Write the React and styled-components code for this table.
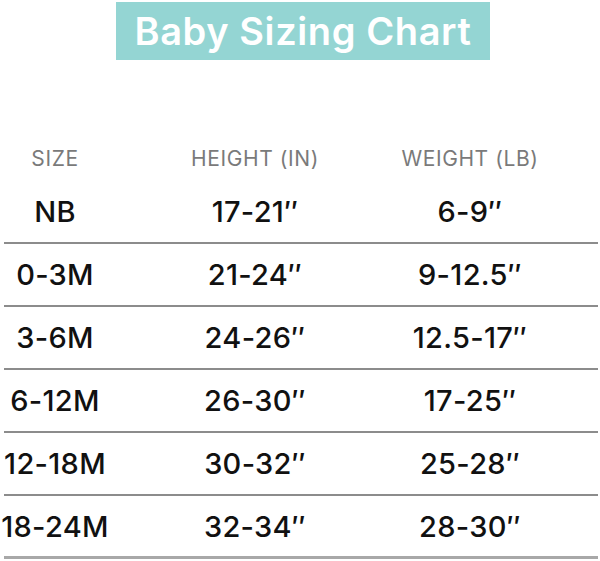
import styled, { createGlobalStyle } from "styled-components";

const GlobalStyle = createGlobalStyle`
  body {
    margin: 0;
    background: #fff;
    font-family: "Inter", "Liberation Sans", sans-serif;
  }
`;

const Page = styled.div`
  width: 600px;
  height: 561px;
  overflow: hidden;
`;

const TitleBox = styled.h1`
  margin: 2px 0 0 116px;
  width: 374px;
  height: 58px;
  background: #94d5d3;
  color: #fff;
  font-size: 38px;
  font-weight: 600;
  display: flex;
  align-items: center;
  justify-content: center;
  letter-spacing: 0.6px;
`;

const Table = styled.div`
  margin: 70px 2px 0 4px;
`;

const Row = styled.div`
  display: grid;
  grid-template-columns: 102px 298px 132px 1fr;
  align-items: center;
  box-sizing: border-box;
  height: ${(p) => (p.$head ? "51px" : "63px")};
  padding-top: ${(p) => (p.$head ? "5px" : "0")};
  border-bottom: ${(p) => (p.$head ? "none" : "2px solid #8c8c8c")};
  &:last-child {
    border-bottom-color: #a8a8a8;
    border-bottom-width: 3px;
  }
`;

const Cell = styled.div`
  justify-self: center;
  white-space: nowrap;
  font-size: ${(p) => (p.$head ? "21px" : "29px")};
  font-weight: ${(p) => (p.$head ? 400 : 500)};
  letter-spacing: ${(p) => (p.$head ? "0.6px" : "0.3px")};
  color: ${(p) => (p.$head ? "#7a7a7a" : "#111")};
`;

const rows = [
  ["NB", "17-21″", "6-9″"],
  ["0-3M", "21-24″", "9-12.5″"],
  ["3-6M", "24-26″", "12.5-17″"],
  ["6-12M", "26-30″", "17-25″"],
  ["12-18M", "30-32″", "25-28″"],
  ["18-24M", "32-34″", "28-30″"],
];

export default function App() {
  return (
    <Page>
      <GlobalStyle />
      <TitleBox>Baby Sizing Chart</TitleBox>
      <Table>
        <Row $head>
          <Cell $head>SIZE</Cell>
          <Cell $head>HEIGHT (IN)</Cell>
          <Cell $head>WEIGHT (LB)</Cell>
        </Row>
        {rows.map((r) => (
          <Row key={r[0]}>
            {r.map((v, i) => (
              <Cell key={i}>{v}</Cell>
            ))}
          </Row>
        ))}
      </Table>
    </Page>
  );
}
